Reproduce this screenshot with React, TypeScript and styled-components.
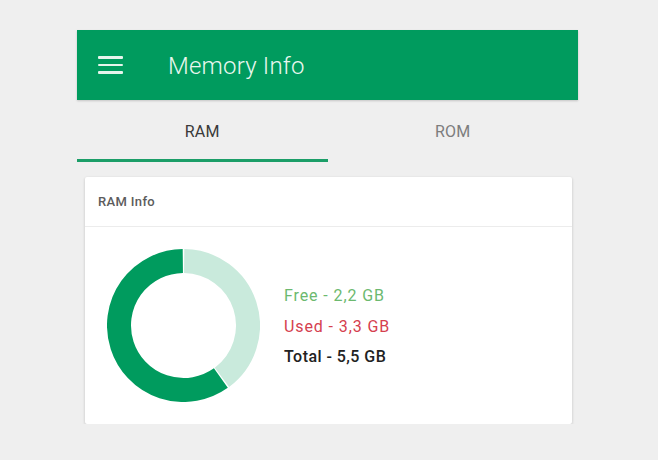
import styled, { createGlobalStyle } from "styled-components";

const GlobalStyle = createGlobalStyle`
  html, body {
    margin: 0;
    background: #efefef;
    font-family: Roboto, "Liberation Sans", sans-serif;
  }
`;

const Frame = styled.div`
  width: 501px;
  margin: 30px 0 0 77px;
`;

const AppBar = styled.header`
  height: 70px;
  background: #009b5e;
  display: flex;
  align-items: center;
  padding-left: 21px;
  box-shadow: 0 1px 2px rgba(0, 0, 0, 0.18);
  position: relative;
`;

const Burger = styled.div`
  width: 25px;
  display: flex;
  flex-direction: column;
  gap: 5px;
  margin-right: 45px;

  span {
    display: block;
    height: 2.5px;
    border-radius: 1px;
    background: #e6f5ec;
  }
`;

const Title = styled.h1`
  margin: 0;
  padding-top: 2px;
  font-size: 24px;
  font-weight: 300;
  color: #eaf7ef;
  letter-spacing: 0.2px;
`;

const Tabs = styled.nav`
  display: flex;
  height: 62px;
`;

const Tab = styled.div<{ active?: boolean }>`
  flex: 1;
  display: flex;
  align-items: center;
  justify-content: center;
  font-size: 16px;
  letter-spacing: 0.2px;
  color: ${(p) => (p.active ? "#3a3a3a" : "#7d7d7d")};
  border-bottom: 3px solid ${(p) => (p.active ? "#1b9e68" : "transparent")};
  box-sizing: border-box;
  padding-top: 3px;
`;

const Card = styled.section`
  margin: 15px 6px 0 8px;
  background: #fff;
  border-radius: 2px;
  box-shadow: 0 1px 3px rgba(0, 0, 0, 0.2);
`;

const CardHeader = styled.div`
  height: 49px;
  display: flex;
  align-items: center;
  padding-left: 13px;
  border-bottom: 1px solid #ececec;
  font-size: 13px;
  font-weight: 500;
  letter-spacing: 0.35px;
  color: #5c5c5c;
`;

const CardBody = styled.div`
  display: flex;
  align-items: center;
  gap: 24px;
  padding: 22px 0 22px 22px;
`;

const Legend = styled.div`
  display: flex;
  flex-direction: column;
  padding-top: 3px;
`;

const LegendItem = styled.div<{ color: string; bold?: boolean }>`
  font-size: 16px;
  line-height: 30.5px;
  letter-spacing: ${(p) => (p.bold ? "0.45px" : "0.9px")};
  color: ${(p) => p.color};
  font-weight: ${(p) => (p.bold ? 500 : 400)};
`;

const arc = (cx: number, cy: number, r: number, a0: number, a1: number) => {
  const pt = (a: number) => {
    const rad = ((a - 90) * Math.PI) / 180;
    return `${cx + r * Math.cos(rad)} ${cy + r * Math.sin(rad)}`;
  };
  const large = a1 - a0 > 180 ? 1 : 0;
  return `M ${pt(a0)} A ${r} ${r} 0 ${large} 1 ${pt(a1)}`;
};

function Donut({ free, total }: { free: number; total: number }) {
  const size = 153;
  const c = size / 2;
  const r = 64.5;
  const split = (free / total) * 360;
  return (
    <svg width={size} height={size} viewBox={`0 0 ${size} ${size}`}>
      <path d={arc(c, c, r, 0.6, split - 0.6)} stroke="#c9eadc" strokeWidth={24} fill="none" />
      <path d={arc(c, c, r, split + 0.6, 359.4)} stroke="#009b5e" strokeWidth={24} fill="none" />
    </svg>
  );
}

export default function App() {
  return (
    <>
      <GlobalStyle />
      <Frame>
        <AppBar>
          <Burger>
            <span />
            <span />
            <span />
          </Burger>
          <Title>Memory Info</Title>
        </AppBar>
        <Tabs>
          <Tab active>RAM</Tab>
          <Tab>ROM</Tab>
        </Tabs>
        <Card>
          <CardHeader>RAM Info</CardHeader>
          <CardBody>
            <Donut free={2.2} total={5.5} />
            <Legend>
              <LegendItem color="#6cb96f">Free - 2,2 GB</LegendItem>
              <LegendItem color="#d5404e">Used - 3,3 GB</LegendItem>
              <LegendItem color="#222" bold>
                Total - 5,5 GB
              </LegendItem>
            </Legend>
          </CardBody>
        </Card>
      </Frame>
    </>
  );
}
